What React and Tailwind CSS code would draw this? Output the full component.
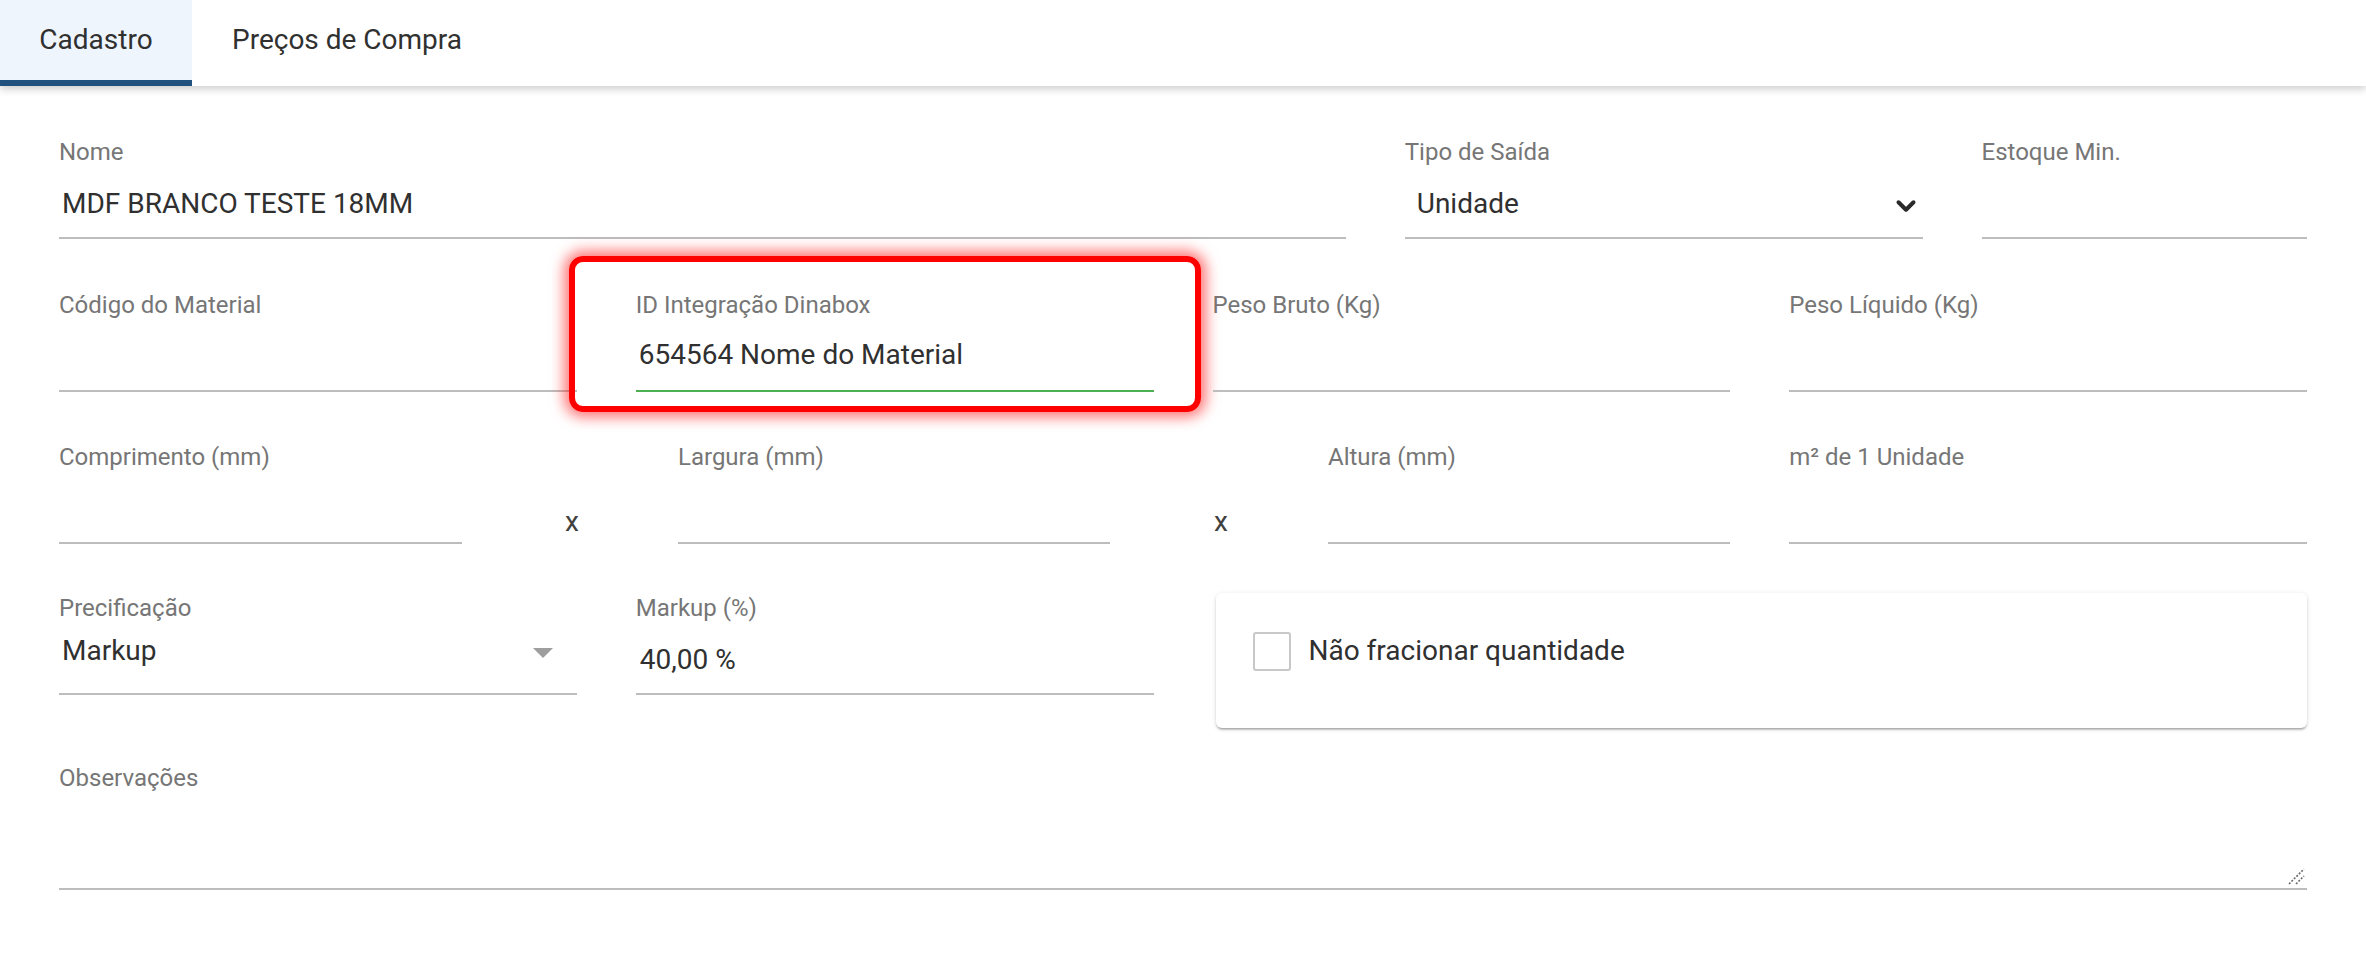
import { ChevronDown } from 'lucide-react'

function Label({ children }) {
  return <div className="h-[30px] text-[24px] leading-[30px] text-[#767676] whitespace-nowrap">{children}</div>
}

function Field({ label, value, className = '', inputClass = '', line = 'border-[#bdbdbd]', children }) {
  return (
    <div className={`flex flex-col ${className}`}>
      <Label>{label}</Label>
      <div className={`relative flex h-[72px] items-center border-b-2 ${line} pl-[3px] text-[28px] text-[#303030] ${inputClass}`}>
        {value}
        {children}
      </div>
    </div>
  )
}

function Times() {
  return (
    <div className="flex h-[102px] justify-center pl-[4px] pt-[58px]">
      <span className="flex h-[44px] items-center text-[28px] text-[#404040]">x</span>
    </div>
  )
}

export default function App() {
  return (
    <div className="min-h-screen bg-white font-['Roboto','Liberation_Sans',sans-serif]">
      {/* Tabs */}
      <div className="relative z-10 flex h-[86px] bg-white shadow-[0_3px_8px_rgba(0,0,0,0.2)]">
        <button className="flex w-[192px] items-center justify-center border-b-[6px] border-[#21527f] bg-[#eef5fd] text-[28px] text-[#303030]">
          Cadastro
        </button>
        <button className="flex items-center px-[40px] pb-[6px] text-[28px] text-[#303030]">
          Preços de Compra
        </button>
      </div>

      <div className="px-[59px] pt-[51px]">
        {/* Row 1 */}
        <div className="grid grid-cols-12 gap-x-[59px]">
          <Field className="col-span-7" label="Nome" value="MDF BRANCO TESTE 18MM" inputClass="pt-[4px]" />
          <Field className="col-span-3" label="Tipo de Saída" value="Unidade" inputClass="pl-[12px] pt-[4px]">
            <ChevronDown size={30} strokeWidth={3.2} className="absolute right-[2px] top-[24px] text-[#2a2a2a]" />
          </Field>
          <Field className="col-span-2" label="Estoque Min." value="" />
        </div>

        {/* Row 2 */}
        <div className="mt-[51px] grid grid-cols-12 gap-x-[59px]">
          <Field className="col-span-3" label="Código do Material" value="" />
          <div className="relative col-span-3">
            <Field label="ID Integração Dinabox" value="654564 Nome do Material" line="border-[#4caf50]" />
            <div className="pointer-events-none absolute -bottom-[20px] -left-[67px] -right-[47px] -top-[34px] rounded-[14px] border-[6px] border-[#ff0000] shadow-[0_0_14px_5px_rgba(255,0,0,0.55)]" />
          </div>
          <Field className="col-span-3" label="Peso Bruto (Kg)" value="" />
          <Field className="col-span-3" label="Peso Líquido (Kg)" value="" />
        </div>

        {/* Row 3 */}
        <div className="mt-[50px] grid grid-cols-12 gap-x-[59px]">
          <div className="col-span-9 flex">
            <Field className="w-[403px]" label="Comprimento (mm)" value="" />
            <div className="w-[216px]"><Times /></div>
            <Field className="w-[432px]" label="Largura (mm)" value="" />
            <div className="w-[218px]"><Times /></div>
            <Field className="w-[402px]" label="Altura (mm)" value="" />
          </div>
          <Field className="col-span-3" label="m² de 1 Unidade" value="" />
        </div>

        {/* Row 4 */}
        <div className="mt-[49px] grid grid-cols-12 items-start gap-x-[59px]">
          <Field className="col-span-3" label="Precificação" value="Markup" inputClass="pb-[15px]">
            <svg width="48" height="48" viewBox="0 0 24 24" className="absolute right-[10px] top-[5px] fill-[#9e9e9e]">
              <path d="M7 10l5 5 5-5z" />
            </svg>
          </Field>
          <Field className="col-span-3" label="Markup (%)" value="40,00 %" inputClass="pl-[4px] pt-[4px]" />
          <div className="col-span-6 ml-[3px] h-[135px] rounded-[6px] bg-white pl-[37px] pt-[37px] shadow-[0_3px_2px_-2px_rgba(0,0,0,0.2),0_2px_2px_rgba(0,0,0,0.14),0_1px_5px_rgba(0,0,0,0.12)]">
            <label className="flex items-center">
              <span className="h-[39px] w-[38px] rounded-[3px] border-2 border-[#c8c8c8] bg-white" />
              <span className="ml-[18px] text-[28px] text-[#303030]">Não fracionar quantidade</span>
            </label>
          </div>
        </div>

        {/* Observações */}
        <div className="mt-[35px] flex flex-col">
          <Label>Observações</Label>
          <div className="relative h-[97px] border-b-2 border-[#bdbdbd]">
            <svg width="18" height="18" viewBox="0 0 18 18" className="absolute bottom-[3px] right-[2px] stroke-[#6b6b6b]" strokeWidth="1.6" strokeDasharray="2 1.5">
              <line x1="2" y1="17" x2="17" y2="2" />
              <line x1="9" y1="17" x2="17" y2="9" />
            </svg>
          </div>
        </div>
      </div>
    </div>
  )
}
